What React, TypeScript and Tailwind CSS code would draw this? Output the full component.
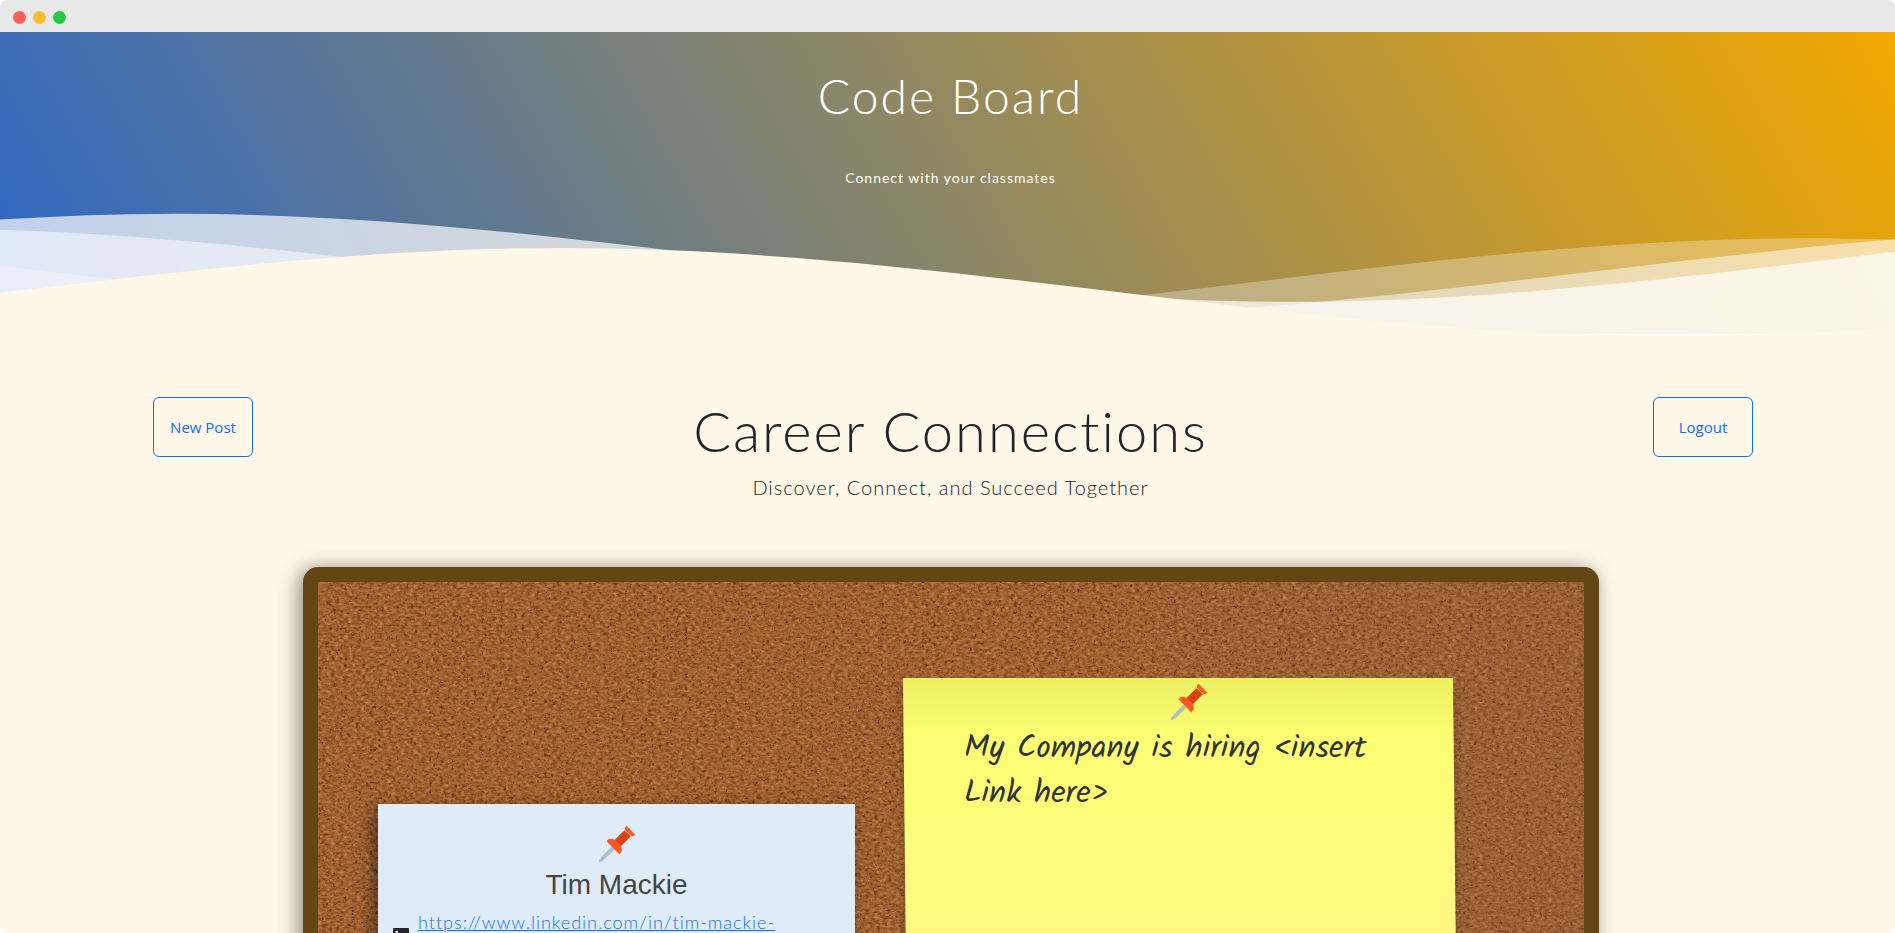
import React from "react";

const WAVE =
  "M-160 44c30 0 58-18 88-18s58 18 88 18 58-18 88-18 58 18 88 18v44h-352z";

function Pin({ className }: { className: string }) {
  return (
    <svg viewBox="0 0 36 36" className={className} aria-hidden="true">
      <path d="M12.6 20.4 15.6 23.4 3.2 35.2C2.2 36.1.2 36 .1 35.8 0 35.6-.1 33.8.8 32.8z" fill="#b0bec5" />
      <path d="M25.5 4.2 15 14.4 21.4 20.8 31.8 10.3z" fill="#d84315" />
      <path d="M7.6 15.2C10 11.8 14.2 12.2 17.6 15.6L20.2 18.2C23.6 21.6 23.8 25.2 20.4 28.5z" fill="#ff5722" />
      <path d="M26 3.8C25.4 1.8 26.6.1 27.8 0L36 8.4C35.6 9.9 34 10.5 32.2 10z" fill="#ff5722" />
    </svg>
  );
}

function LinkedInIcon() {
  return (
    <svg viewBox="0 0 16 16" className="h-4 w-4 shrink-0" fill="#212529" aria-hidden="true">
      <path d="M0 1.146C0 .513.526 0 1.175 0h13.65C15.474 0 16 .513 16 1.146v13.708c0 .633-.526 1.146-1.175 1.146H1.175C.526 16 0 15.487 0 14.854zm4.943 12.248V6.169H2.542v7.225zm-1.2-8.212c.837 0 1.358-.554 1.358-1.248-.015-.709-.52-1.248-1.342-1.248S2.4 3.226 2.4 3.934c0 .694.521 1.248 1.327 1.248zm4.908 8.212V9.359c0-.216.016-.432.08-.586.173-.431.568-.878 1.232-.878.869 0 1.216.662 1.216 1.634v3.865h2.401V9.25c0-2.22-1.184-3.252-2.764-3.252-1.274 0-1.845.7-2.165 1.193v.025h-.016l.016-.025V6.169h-2.4c.03.678 0 7.225 0 7.225z" />
    </svg>
  );
}

function CorkTexture() {
  return (
    <svg className="absolute inset-0 h-full w-full" aria-hidden="true">
      <defs>
        <filter id="grain" x="0" y="0" width="100%" height="100%" colorInterpolationFilters="sRGB">
          <feTurbulence type="fractalNoise" baseFrequency="0.23 0.37" numOctaves="4" seed="8" />
          <feColorMatrix
            type="matrix"
            values="0.3 0.22 0.1 0 0.32  0.26 0.2 0.1 0 0.105  0.2 0.16 0.08 0 -0.025  0 0 0 0 1"
          />
        </filter>
        <filter id="specks" x="0" y="0" width="100%" height="100%" colorInterpolationFilters="sRGB">
          <feTurbulence type="fractalNoise" baseFrequency="0.27 0.33" numOctaves="5" seed="31" />
          <feColorMatrix
            type="matrix"
            values="0 0 0 0 0.36  0 0 0 0 0.18  0 0 0 0 0.05  4.5 0 0 0 -2.75"
          />
        </filter>
      </defs>
      <rect width="100%" height="100%" filter="url(#grain)" />
      <rect width="100%" height="100%" filter="url(#specks)" />
    </svg>
  );
}

function ProfileCard() {
  return (
    <article className="mt-[126px] h-[420px] w-[477px] bg-[#dfecf8] px-[15px] pt-[22px] shadow-[-5px_5px_15px_rgba(0,0,0,0.5)]">
      <Pin className="mx-auto h-9 w-9" />
      <h2 className="mt-[6px] text-center font-['Liberation_Sans',Arial,sans-serif] text-[28px] leading-[34px] text-[#444]">
        Tim Mackie
      </h2>
      <div className="mt-[7px] flex items-center gap-[9px]">
        <LinkedInIcon />
        <a
          href="https://www.linkedin.com/in/tim-mackie-developer"
          className="w-[360px] break-words text-[18px] leading-[27px] font-light tracking-[1px] text-[#0d6efd] underline"
        >
          https://www.linkedin.com/in/tim-mackie-developer
        </a>
      </div>
    </article>
  );
}

function StickyNote() {
  return (
    <article className="relative h-[420px] w-[550px] pt-[6px]">
      <div className="absolute inset-0 origin-top skew-x-[0.6deg] bg-[linear-gradient(to_bottom,#edf061_0,#f2f567_30px,#fdff73_56px,#fefd78_120px,#fef883_260px,#fdf585_100%)] shadow-[0_8px_10px_rgba(0,0,0,0.3)]" />
      <div className="relative px-[61px]">
        <Pin className="mx-auto h-9 w-9 translate-x-[11px]" />
        <p className="mt-[6px] font-['Kalam','Lato',cursive] text-[32px] leading-[45px] font-normal text-[#333]">
          My Company is hiring &lt;insert Link here&gt;
        </p>
      </div>
    </article>
  );
}

const OUTLINE_BUTTON =
  "h-[60px] w-[100px] rounded-md border border-[#0d6efd] font-['Segoe_UI','Open_Sans',sans-serif] text-[15px] text-[#0d6efd] hover:bg-[#0d6efd] hover:text-white";

export default function App() {
  return (
    <div className="flex h-screen flex-col overflow-hidden rounded-lg bg-[#fff7e7] font-['Lato',sans-serif] text-[#212529]">
      <div className="flex h-8 shrink-0 items-center gap-[7px] bg-[#e8e8e8] pt-[2px] pl-[13px]">
        <span className="h-[13px] w-[13px] rounded-full bg-[#ff5f57]" />
        <span className="h-[13px] w-[13px] rounded-full bg-[#febc2e]" />
        <span className="h-[13px] w-[13px] rounded-full bg-[#28c840]" />
      </div>

      <div className="min-h-0 flex-1 overflow-y-auto [scrollbar-width:none]">
        <header className="h-[302px] bg-[linear-gradient(60deg,#2b67c6_0%,#f2a800_100%)] text-center text-white">
          <div className="h-[172px] pt-[35px] pl-[6px]">
            <h1 className="text-[48px] leading-[58px] font-light tracking-[2px]">Code Board</h1>
            <p className="mt-[42px] text-[14px] leading-[21px] tracking-[1px]">
              Connect with your classmates
            </p>
          </div>
          <svg
            viewBox="0 24 150 28"
            preserveAspectRatio="none"
            className="relative block h-[137px] w-full"
            aria-hidden="true"
          >
            <defs>
              <path id="gentle-wave" d={WAVE} />
            </defs>
            <use href="#gentle-wave" x="86" y="0" fill="rgba(255,255,255,0.7)" />
            <use href="#gentle-wave" x="65.5" y="3" fill="rgba(255,255,255,0.5)" />
            <use href="#gentle-wave" x="39" y="5" fill="rgba(255,255,255,0.3)" />
            <use href="#gentle-wave" x="116.5" y="7" fill="#fff7e7" />
          </svg>
        </header>

        <main>
          <section className="flex justify-between pt-[63px] pr-[142px] pl-[153px]">
            <button type="button" className={OUTLINE_BUTTON}>
              New Post
            </button>
            <div className="pr-[5px] text-center">
              <h2 className="text-[56px] leading-[67px] font-light tracking-[2px]">Career Connections</h2>
              <p className="mt-2 text-[20px] leading-[30px] font-light tracking-[1px]">
                Discover, Connect, and Succeed Together
              </p>
            </div>
            <button type="button" className={OUTLINE_BUTTON}>
              Logout
            </button>
          </section>

          <section className="pt-[65px] pb-16 pl-[7px]">
            <div className="relative mx-auto w-[1296px] max-w-full rounded-[15px] bg-[#644514] p-[15px] shadow-[-4px_2px_20px_rgba(0,0,0,0.45)]">
              <div className="relative overflow-hidden bg-[#a0622f]">
                <CorkTexture />
                <div className="absolute inset-0 bg-[linear-gradient(100deg,transparent_55%,rgba(130,95,75,0.25)_100%)]" />
                <div className="relative flex gap-12 px-[60px] pt-[96px] pb-24">
                  <ProfileCard />
                  <StickyNote />
                </div>
              </div>
            </div>
          </section>
        </main>
      </div>
    </div>
  );
}
